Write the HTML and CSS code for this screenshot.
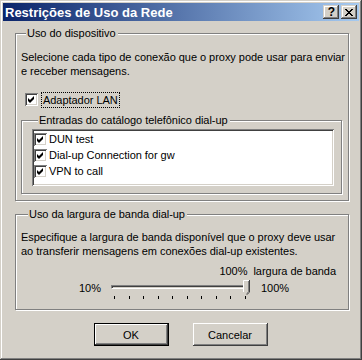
FILE: index.html
```html
<!DOCTYPE html>
<html lang="pt">
<head>
<meta charset="utf-8">
<title>Restrições de Uso da Rede</title>
<link rel="stylesheet" href="styles.css">
</head>
<body>
<div class="window">
  <div class="titlebar">
    <span class="title">Restrições de Uso da Rede</span>
    <div class="caption-buttons">
      <span class="cap-btn help">?</span>
      <span class="cap-btn close">
        <svg width="8" height="7" viewBox="0 0 8 7"><path d="M0 0h2v1h-2zM6 0h2v1h-2zM1 1h2v1h-2zM5 1h2v1h-2zM2 2h4v1h-4zM3 3h2v1h-2zM2 4h4v1h-4zM1 5h2v1h-2zM5 5h2v1h-2zM0 6h2v1h-2zM6 6h2v1h-2z" fill="#000"/></svg>
      </span>
    </div>
  </div>

  <div class="group group-device">
    <div class="group-title">Uso do dispositivo</div>
    <p class="desc">Selecione cada tipo de conexão que o proxy pode usar para enviar<br>e receber mensagens.</p>
    <div class="check-row">
      <span class="checkbox">
        <svg width="9" height="9" viewBox="0 0 9 9"><path d="M1 3L3 5L7 1V4L3 8L1 6Z" fill="#000"/></svg>
      </span>
      <span class="check-label focused">Adaptador LAN</span>
    </div>
    <div class="group group-inner">
      <div class="group-title">Entradas do catálogo telefônico dial-up</div>
      <div class="listbox">
        <div class="list-item">
          <span class="checkbox">
            <svg width="9" height="9" viewBox="0 0 9 9"><path d="M1 3L3 5L7 1V4L3 8L1 6Z" fill="#000"/></svg>
          </span>
          <span>DUN test</span>
        </div>
        <div class="list-item">
          <span class="checkbox">
            <svg width="9" height="9" viewBox="0 0 9 9"><path d="M1 3L3 5L7 1V4L3 8L1 6Z" fill="#000"/></svg>
          </span>
          <span>Dial-up Connection for gw</span>
        </div>
        <div class="list-item">
          <span class="checkbox">
            <svg width="9" height="9" viewBox="0 0 9 9"><path d="M1 3L3 5L7 1V4L3 8L1 6Z" fill="#000"/></svg>
          </span>
          <span>VPN to call</span>
        </div>
      </div>
    </div>
  </div>

  <div class="group group-band">
    <div class="group-title">Uso da largura de banda dial-up</div>
    <p class="desc">Especifique a largura de banda disponível que o proxy deve usar<br>ao transferir mensagens em conexões dial-up existentes.</p>
    <div class="value-row">100%&nbsp; largura de banda</div>
    <div class="slider-row">
      <span class="min-label">10%</span>
      <div class="slider">
        <div class="track"></div>
        <div class="ticks">
          <i></i><i></i><i></i><i></i><i></i><i></i><i></i><i></i><i></i><i></i>
        </div>
        <svg class="thumb" width="7" height="15" viewBox="0 0 7 15">
          <path d="M0 0H7V12L3.5 15L0 12Z" fill="#D4D0C8"/>
          <path d="M0.5 12V0.5H6" stroke="#fff" fill="none"/>
          <path d="M6.5 0V12.2L3.5 14.8" stroke="#404040" fill="none"/>
          <path d="M5.5 1V11.8L3.5 13.6" stroke="#808080" fill="none"/>
        </svg>
      </div>
      <span class="max-label">100%</span>
    </div>
  </div>

  <div class="buttons">
    <button class="btn default">OK</button>
    <button class="btn">Cancelar</button>
  </div>
</div>
</body>
</html>
```
FILE: styles.css
```css
html, body {
  margin: 0;
  padding: 0;
}
body {
  width: 362px;
  height: 360px;
  font-family: "Liberation Sans", Arial, sans-serif;
  font-size: 11px;
  letter-spacing: -0.04px;
  color: #000;
}
.window {
  box-sizing: border-box;
  width: 362px;
  height: 360px;
  padding: 3px;
  background: #D4D0C8;
  box-shadow: inset -1px -1px #404040, inset 1px 1px #D4D0C8, inset -2px -2px #808080, inset 2px 2px #fff;
}
.titlebar {
  height: 18px;
  display: flex;
  align-items: center;
  justify-content: space-between;
  padding: 0 2px 0 2px;
  background: linear-gradient(to right, #0A246A, #A6CAF0);
  color: #fff;
}
.title {
  font-weight: bold;
  font-size: 13px;
  letter-spacing: 0;
}
.caption-buttons {
  display: flex;
  gap: 2px;
}
.cap-btn {
  box-sizing: border-box;
  width: 16px;
  height: 14px;
  display: flex;
  align-items: center;
  justify-content: center;
  background: #D4D0C8;
  box-shadow: inset -1px -1px #404040, inset 1px 1px #D4D0C8, inset -2px -2px #808080, inset 2px 2px #fff;
  color: #000;
}
.cap-btn.help {
  font-weight: bold;
  font-size: 12px;
  line-height: 14px;
  padding-left: 1px;
}
.group {
  box-sizing: border-box;
  border: 1px solid #808080;
  box-shadow: inset 1px 1px #fff, 1px 1px #fff;
}
.group-title {
  width: fit-content;
  margin: -7px 0 0 5px;
  padding: 0 2px 0 1px;
  line-height: 13px;
  background: #D4D0C8;
  white-space: nowrap;
}
.group-device {
  margin: 12px 10px 0 12px;
  height: 168px;
  padding: 0 6px 0 5px;
}
.desc {
  margin: 10px 0 0 0;
  line-height: 14px;
  white-space: nowrap;
}
.check-row {
  display: flex;
  align-items: center;
  margin: 13px 0 0 4px;
  height: 17px;
}
.checkbox {
  box-sizing: border-box;
  width: 13px;
  height: 13px;
  flex: none;
  display: flex;
  align-items: center;
  justify-content: center;
  background: #fff;
  box-shadow: inset 1px 1px #808080, inset -1px -1px #fff, inset 2px 2px #404040, inset -2px -2px #D4D0C8;
}
.check-label {
  margin-left: 4px;
  padding: 0 1px;
  line-height: 14px;
}
.check-label.focused {
  outline: 1px dotted #000;
  outline-offset: 0;
}
.group-inner {
  margin-top: 12px;
  height: 74px;
  padding: 0 7px 0 10px;
}
.group-inner .group-title {
  margin-left: 6px;
}
.listbox {
  box-sizing: border-box;
  margin-top: 2px;
  height: 57px;
  padding: 2px;
  background: #fff;
  box-shadow: inset 1px 1px #808080, inset -1px -1px #fff, inset 2px 2px #404040, inset -2px -2px #D4D0C8;
}
.list-item {
  display: flex;
  align-items: center;
  gap: 2px;
  height: 16px;
  white-space: nowrap;
}
.group-band {
  margin: 13px 10px 0 12px;
  height: 96px;
  padding: 0 12px 0 5px;
}
.group-band .group-title {
  margin-left: 7px;
}
.group-band .desc {
  margin-top: 9px;
}
.value-row {
  margin-top: 6px;
  line-height: 14px;
  text-align: right;
  white-space: nowrap;
}
.slider-row {
  display: flex;
  align-items: flex-start;
  height: 20px;
  margin-top: 1px;
}
.min-label {
  width: 32px;
  margin-left: 58px;
  margin-top: 2px;
  line-height: 14px;
}
.slider {
  position: relative;
  width: 139px;
  height: 20px;
}
.track {
  box-sizing: border-box;
  margin-top: 6px;
  height: 4px;
  border: 1px solid;
  border-color: #808080 #fff #fff #808080;
  box-shadow: inset 1px 1px #404040;
}
.ticks {
  display: flex;
  justify-content: space-between;
  margin-top: 7px;
  padding: 0 4px 0 3px;
}
.ticks i {
  display: block;
  width: 1px;
  height: 3px;
  background: #000;
}
.thumb {
  position: absolute;
  left: 132px;
  top: 1px;
}
.max-label {
  margin-left: 11px;
  margin-top: 2px;
  line-height: 14px;
}
.buttons {
  display: flex;
  justify-content: center;
  gap: 24px;
  margin-top: 13px;
  padding-right: 1px;
}
.btn {
  box-sizing: border-box;
  width: 75px;
  height: 23px;
  padding: 0;
  border: none;
  background: #D4D0C8;
  font-family: "Liberation Sans", Arial, sans-serif;
  font-size: 11px;
  color: #000;
  box-shadow: inset -1px -1px #404040, inset 1px 1px #fff, inset -2px -2px #808080, inset 2px 2px #D4D0C8;
}
.btn.default {
  border: 1px solid #000;
  box-shadow: inset -1px -1px #404040, inset 1px 1px #fff, inset -2px -2px #808080;
}
```
